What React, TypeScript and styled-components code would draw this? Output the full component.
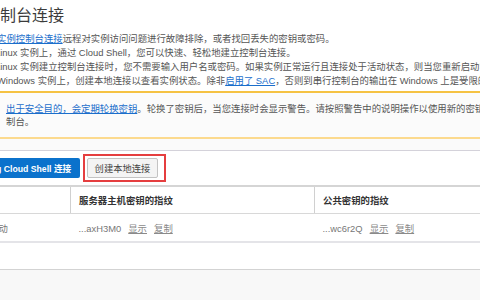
import React from 'react';
import styled, { createGlobalStyle } from 'styled-components';

const GlobalStyle = createGlobalStyle`
  html, body {
    margin: 0;
    padding: 0;
    background: #ffffff;
  }
  body {
    font-family: "Liberation Sans", "Noto Sans CJK SC", sans-serif;
  }
`;

const StyledPage = styled.div`
  width: 480px;
  height: 300px;
  overflow: hidden;
  display: flex;
  flex-direction: column;
  background: #ffffff;
  color: #555555;
  font-size: 9.4px;
`;

const StyledTitle = styled.h1`
  margin: 4px 0 0 -16px;
  font-size: 16px;
  line-height: 24px;
  font-weight: 400;
  color: #3b3b3b;
  white-space: nowrap;
`;

const StyledIntro = styled.div`
  display: flex;
  flex-direction: column;
  margin-top: 4px;
`;

const StyledLine = styled.div<{ $indent: number }>`
  margin-left: ${({ $indent }) => $indent}px;
  line-height: 14px;
  white-space: nowrap;
`;

const StyledLink = styled.a`
  color: #1b6ecb;
  text-decoration: underline;
`;

const StyledAlert = styled.div`
  margin-top: 3px;
  padding: 9px 0 9px 6px;
  background: #fbfbfb;
  border-top: 2px solid #f5c243;
  border-bottom: 2px solid #fcda8e;
  line-height: 13px;
  white-space: nowrap;
`;

const StyledGap = styled.div`
  height: 11px;
  background: #fafafa;
  border-bottom: 1px solid #d4d2da;
`;

const StyledActions = styled.div`
  display: flex;
  align-items: center;
  gap: 3px;
  padding: 3px 0 3px 0;
`;

const StyledPrimary = styled.button`
  height: 20px;
  width: 84px;
  margin-left: -4px;
  padding: 0;
  border: none;
  border-radius: 2px;
  background: #0b72cc;
  color: #ffffff;
  font-family: inherit;
  font-size: 8.7px;
  font-weight: 700;
  text-align: left;
  white-space: nowrap;
`;

const StyledHighlight = styled.div`
  display: flex;
  padding: 2px 6px 2px 2px;
  border: 2px solid #e53e3f;
`;

const StyledSecondary = styled.button`
  height: 20px;
  width: 71px;
  padding: 0;
  border: 1px solid #c3c3c3;
  border-radius: 2px;
  background: #f4f4f4;
  color: #444444;
  font-family: inherit;
  font-size: 9.3px;
  white-space: nowrap;
`;

const StyledTable = styled.table`
  width: 100%;
  border-collapse: collapse;
  border-top: 2px solid #d5d5d5;
  table-layout: fixed;
`;

const StyledHead = styled.th<{ $width?: number; $divider?: boolean }>`
  ${({ $width }) => ($width ? `width: ${$width}px;` : '')}
  height: 26px;
  padding: 0 0 0 8px;
  text-align: left;
  font-weight: 700;
  color: #333333;
  border-bottom: 1px solid #d8d8d8;
  border-left: ${({ $divider }) => ($divider ? '1px solid #d0d0d0' : 'none')};
  white-space: nowrap;
`;

const StyledCell = styled.td`
  height: 27px;
  padding: 0 0 0 8px;
  color: #777777;
  border-bottom: 2px solid #e4e4e8;
  white-space: nowrap;
  overflow: visible;
`;

const StyledStatus = styled.span`
  margin-left: -19px;
`;

const StyledAction = styled.span`
  margin-left: 7px;
  color: #8a8a8a;
  text-decoration: underline;
`;

const StyledSpacer = styled.div`
  height: 26px;
  border-bottom: 1px solid #d3d3d3;
`;

const StyledFooter = styled.div`
  flex: 1;
  background: #f8f8f8;
`;

const Fingerprint: React.FC<{ value: string }> = ({ value }) => (
  <>
    {value}
    <StyledAction>显示</StyledAction>
    <StyledAction>复制</StyledAction>
  </>
);

export default function App() {
  return (
    <>
      <GlobalStyle />
      <StyledPage>
        <StyledTitle>控制台连接</StyledTitle>
        <StyledIntro>
          <StyledLine $indent={-3}>
            <StyledLink>实例控制台连接</StyledLink>
            远程对实例访问问题进行故障排除，或者找回丢失的密钥或密码。
          </StyledLine>
          <StyledLine $indent={-5}>
            Linux 实例上，通过 Cloud Shell，您可以快速、轻松地建立控制台连接。
          </StyledLine>
          <StyledLine $indent={-5}>
            Linux 实例建立控制台连接时，您不需要输入用户名或密码。如果实例正常运行且连接处于活动状态，则当您重新启动实例时
          </StyledLine>
          <StyledLine $indent={-3}>
            Windows 实例上，创建本地连接以查看实例状态。除非<StyledLink>启用了 SAC</StyledLink>
            ，否则到串行控制台的输出在 Windows 上是受限的。
          </StyledLine>
        </StyledIntro>
        <StyledAlert>
          <StyledLink>出于安全目的，会定期轮换密钥</StyledLink>
          。轮换了密钥后，当您连接时会显示警告。请按照警告中的说明操作以使用新的密钥连接到控
          <br />
          制台。
        </StyledAlert>
        <StyledGap />
        <StyledActions>
          <StyledPrimary>g Cloud Shell 连接</StyledPrimary>
          <StyledHighlight>
            <StyledSecondary>创建本地连接</StyledSecondary>
          </StyledHighlight>
        </StyledActions>
        <StyledTable>
          <thead>
            <tr>
              <StyledHead $width={62} />
              <StyledHead $width={235} $divider>
                服务器主机密钥的指纹
              </StyledHead>
              <StyledHead $divider>公共密钥的指纹</StyledHead>
            </tr>
          </thead>
          <tbody>
            <tr>
              <StyledCell>
                <StyledStatus>活动</StyledStatus>
              </StyledCell>
              <StyledCell>
                <Fingerprint value="...axH3M0" />
              </StyledCell>
              <StyledCell>
                <Fingerprint value="...wc6r2Q" />
              </StyledCell>
            </tr>
          </tbody>
        </StyledTable>
        <StyledSpacer />
        <StyledFooter />
      </StyledPage>
    </>
  );
}
